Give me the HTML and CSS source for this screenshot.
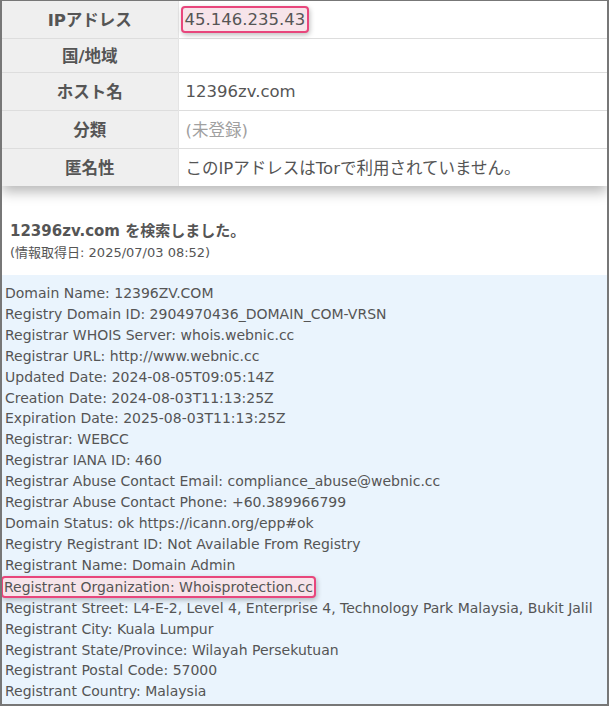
FILE: index.html
```html
<!DOCTYPE html>
<html lang="ja">
<head>
    <meta charset="UTF-8">
    <meta name="viewport" content="width=device-width, initial-scale=1.0">
    <title>12396zv.com WHOIS</title>
    <link rel="stylesheet" href="styles.css">
</head>
<body>
    <div class="frame">
        <table class="info-table">
            <tr>
                <th>IPアドレス</th>
                <td><span class="mark">45.146.235.43</span></td>
            </tr>
            <tr class="row-short">
                <th>国/地域</th>
                <td></td>
            </tr>
            <tr>
                <th>ホスト名</th>
                <td>12396zv.com</td>
            </tr>
            <tr>
                <th>分類</th>
                <td class="muted">(未登録)</td>
            </tr>
            <tr>
                <th>匿名性</th>
                <td>このIPアドレスはTorで利用されていません。</td>
            </tr>
        </table>

        <div class="search-head">
            <div class="search-title">12396zv.com を検索しました。</div>
            <div class="search-date">(情報取得日: 2025/07/03 08:52)</div>
        </div>

        <div class="whois">
            <div>Domain Name: 12396ZV.COM</div>
            <div>Registry Domain ID: 2904970436_DOMAIN_COM-VRSN</div>
            <div>Registrar WHOIS Server: whois.webnic.cc</div>
            <div>Registrar URL: http://www.webnic.cc</div>
            <div>Updated Date: 2024-08-05T09:05:14Z</div>
            <div>Creation Date: 2024-08-03T11:13:25Z</div>
            <div>Expiration Date: 2025-08-03T11:13:25Z</div>
            <div>Registrar: WEBCC</div>
            <div>Registrar IANA ID: 460</div>
            <div>Registrar Abuse Contact Email: compliance_abuse@webnic.cc</div>
            <div>Registrar Abuse Contact Phone: +60.389966799</div>
            <div>Domain Status: ok https://icann.org/epp#ok</div>
            <div>Registry Registrant ID: Not Available From Registry</div>
            <div>Registrant Name: Domain Admin</div>
            <div><span class="mark mark-line">Registrant Organization: Whoisprotection.cc</span></div>
            <div>Registrant Street: L4-E-2, Level 4, Enterprise 4, Technology Park Malaysia, Bukit Jalil</div>
            <div>Registrant City: Kuala Lumpur</div>
            <div>Registrant State/Province: Wilayah Persekutuan</div>
            <div>Registrant Postal Code: 57000</div>
            <div>Registrant Country: Malaysia</div>
        </div>
    </div>
</body>
</html>
```

FILE: styles.css
```css
html, body {
    margin: 0;
    padding: 0;
    background: #fff;
}

body {
    font-family: "DejaVu Sans", "Noto Sans CJK JP", sans-serif;
    color: #555;
}

.frame {
    box-sizing: border-box;
    width: 609px;
    height: 706px;
    border: 2px solid #777;
    border-top-width: 1px;
    overflow: hidden;
    display: flex;
    flex-direction: column;
}

/* info table */
.info-table {
    width: 100%;
    table-layout: fixed;
    border-collapse: collapse;
    box-shadow: 0 6px 12px rgba(0, 0, 0, 0.28);
    font-size: 16.5px;
    position: relative;
    z-index: 1;
}

.info-table th,
.info-table td {
    box-sizing: border-box;
    height: 38px;
    padding: 0 0 0 7px;
    border-top: 1px solid #ddd;
    vertical-align: middle;
}

.info-table tr:first-child th,
.info-table tr:first-child td {
    height: 37px;
    border-top: none;
}

.info-table th {
    width: 176px;
    background: #efefef;
    text-align: center;
    font-weight: bold;
    padding: 0;
    border-right: 1px solid #e4e4e4;
}

.info-table td {
    background: #fff;
}

.info-table .row-short th,
.info-table .row-short td {
    height: 34px;
}

.muted {
    color: #a0a0a0;
}

.mark {
    display: inline-block;
    border: 2px solid #e8467c;
    border-radius: 4px;
    background: #f7e4ea;
    box-shadow: 1px 2px 5px rgba(0, 0, 0, 0.25);
    padding: 2px 2px;
    margin-left: -5px;
}

.mark-line {
    padding: 0 1px;
    margin-left: -4px;
    line-height: 18px;
}

/* search header */
.search-head {
    padding: 34px 8px 11px;
}

.search-title {
    font-size: 15px;
    font-weight: bold;
    line-height: 22px;
}

.search-date {
    font-size: 13px;
    line-height: 22px;
}

/* whois dump */
.whois {
    flex: 1;
    background: #eaf4fd;
    padding: 8px 3px 0;
    font-size: 14px;
    line-height: 20.9px;
    white-space: nowrap;
}
```
